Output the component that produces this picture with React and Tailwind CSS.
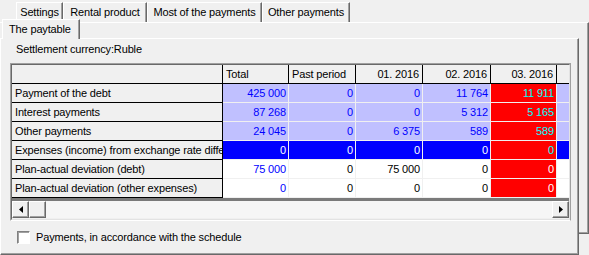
const cols = [
  { label: 'Total', w: 'w-[66px]', left: true },
  { label: 'Past period', w: 'w-[67px]', left: true },
  { label: '01. 2016', w: 'w-[67px]' },
  { label: '02. 2016', w: 'w-[68px]' },
  { label: '03. 2016', w: 'w-[66px]' },
];

const rows = [
  { label: 'Payment of the debt', kind: 'lav', values: ['425 000', '0', '0', '11 764', '11 911'] },
  { label: 'Interest payments', kind: 'lav', values: ['87 268', '0', '0', '5 312', '5 165'] },
  { label: 'Other payments', kind: 'lav', values: ['24 045', '0', '6 375', '589', '589'] },
  { label: 'Expenses (income) from exchange rate differences', kind: 'sel', values: ['0', '0', '0', '0', '0'] },
  { label: 'Plan-actual deviation (debt)', kind: 'plain', values: ['75 000', '0', '75 000', '0', '0'] },
  { label: 'Plan-actual deviation (other expenses)', kind: 'plain', values: ['0', '0', '0', '0', '0'] },
];

function cellStyle(kind, i) {
  if (i === 4) {
    if (kind === 'plain') return 'bg-[#ff0000] text-white';
    return 'bg-[#ff0000] text-[#00ffff]';
  }
  if (kind === 'lav') return 'bg-[#c0c0ff] text-[#0000ff]';
  if (kind === 'sel') return 'bg-[#0000ff] text-white';
  return i === 0 ? 'bg-white text-[#0000ff]' : 'bg-white text-black';
}

function restStyle(kind) {
  if (kind === 'lav') return 'bg-[#c0c0ff]';
  if (kind === 'sel') return 'bg-[#0000ff]';
  return 'bg-white';
}

function Tab({ children, className }) {
  return (
    <div
      className={`flex items-center justify-center border-l border-t border-r border-l-white border-t-white border-r-[#696969] shadow-[inset_-1px_0_0_#a0a0a0] ${className}`}
    >
      {children}
    </div>
  );
}

function Arrow({ dir }) {
  return (
    <svg width="4" height="7" viewBox="0 0 4 7">
      {dir === 'left' ? <path d="M4 0 L0 3.5 L4 7 Z" fill="#000" /> : <path d="M0 0 L4 3.5 L0 7 Z" fill="#000" />}
    </svg>
  );
}

function RaisedBox({ className, children }) {
  return (
    <div
      className={`flex items-center justify-center bg-[#f0f0f0] border border-t-white border-l-white border-r-[#696969] border-b-[#696969] shadow-[inset_-1px_-1px_0_#a0a0a0] ${className}`}
    >
      {children}
    </div>
  );
}

function Grid() {
  return (
    <div className="ml-[9px] w-[561px] h-[158px] border border-t-[#a0a0a0] border-l-[#a0a0a0] border-r-[#a0a0a0] border-b-white">
      <div className="w-full h-full border border-t-[#696969] border-l-[#696969] border-r-[#e3e3e3] border-b-[#e3e3e3] flex flex-col bg-[#f0f0f0]">
        {/* header */}
        <div className="flex h-[19px]">
          <div className="w-[211px] border-r border-b border-black" />
          {cols.map((c) => (
            <div
              key={c.label}
              className={`${c.w} border-r border-b border-black flex items-center ${c.left ? 'pl-[3px]' : 'justify-end pr-[3px]'}`}
            >
              {c.label}
            </div>
          ))}
          <div className="flex-1 border-b border-black" />
        </div>
        {rows.map((r) => (
          <div key={r.label} className="flex h-[19px]">
            <div className="w-[211px] border-r border-b border-black flex items-center pl-[3px] whitespace-nowrap overflow-hidden">
              {r.label}
            </div>
            {r.values.map((v, i) => (
              <div
                key={i}
                className={`${cols[i].w} border-r border-b border-[#f0f0f0] flex items-center justify-end pr-[2px] ${cellStyle(r.kind, i)}`}
              >
                {v}
              </div>
            ))}
            <div className={`flex-1 border-b border-[#f0f0f0] ${restStyle(r.kind)}`} />
          </div>
        ))}
        <div className="h-[3px] bg-[#7a7a7a]" />
        {/* horizontal scrollbar */}
        <div className="flex h-[17px] bg-[#f6f6f6]">
          <RaisedBox className="w-[17px] h-[17px]">
            <Arrow dir="left" />
          </RaisedBox>
          <RaisedBox className="w-[17px] h-[17px]" />
          <div className="flex-1" />
          <RaisedBox className="w-[17px] h-[17px]">
            <Arrow dir="right" />
          </RaisedBox>
        </div>
      </div>
    </div>
  );
}

export default function App() {
  return (
    <div className="w-[589px] h-[255px] overflow-hidden bg-[#f0f0f0] text-[11px] leading-none tracking-[-0.15px] text-black font-['Liberation_Sans',Arial,sans-serif]">
      {/* outer tab strip */}
      <div className="flex pl-[16px] pt-[2px] h-[22px]">
        <Tab className="w-[47px] h-[20px]">Settings</Tab>
        <Tab className="w-[84px] h-[20px]">Rental product</Tab>
        <Tab className="w-[115px] h-[20px]">Most of the payments</Tab>
        <Tab className="w-[88px] h-[20px]">Other payments</Tab>
      </div>

      {/* outer panel */}
      <div className="w-[589px] h-[212px] border-t border-t-white border-r border-r-[#696969] border-b border-b-[#696969] shadow-[inset_-1px_-1px_0_#a0a0a0]">
        <div className="-mt-[4px]">
          {/* nested tab strip */}
          <div className="flex pl-[2px] h-[19px]">
            <div className="w-[78px] h-[20px] flex items-center pl-[6px] bg-[#f0f0f0] border-l border-t border-r border-l-white border-t-white border-r-[#696969] shadow-[inset_-1px_0_0_#a0a0a0] relative z-10">
              The paytable
            </div>
          </div>

          {/* nested panel */}
          <div className="w-[579px] h-[217px] bg-[#f0f0f0] border border-t-white border-l-white border-r-[#696969] border-b-[#696969]">
            <div className="w-full h-full border-r border-b border-r-[#a0a0a0] border-b-[#a0a0a0] flex flex-col">
              <div className="pl-[15px] pt-[5px] h-[24px]">Settlement currency:Ruble</div>
              <Grid />
              <div className="flex items-center mt-[10px] pl-[16px] gap-[6px]">
                <div className="w-[13px] h-[13px] bg-white border border-t-[#808080] border-l-[#808080] border-r-white border-b-white shadow-[inset_1px_1px_0_#a0a0a0]" />
                <span>Payments, in accordance with the schedule</span>
              </div>
            </div>
          </div>
        </div>
      </div>
    </div>
  );
}
